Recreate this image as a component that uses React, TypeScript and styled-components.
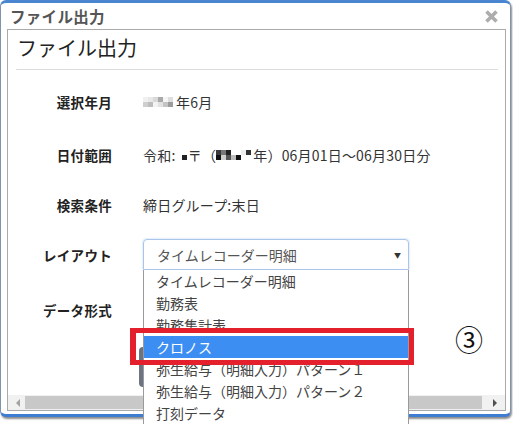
import React from "react";
import styled, { createGlobalStyle } from "styled-components";

const Global = createGlobalStyle`
  html, body { margin: 0; padding: 0; background: #ffffff; overflow: hidden; }
  body { font-family: "Noto Sans CJK JP", "Noto Sans", sans-serif; color: #222; }
  * { box-sizing: border-box; }
`;

const Page = styled.div`
  width: 513px;
  height: 425px;
  position: relative;
`;

const Window = styled.div`
  position: relative;
  width: 511px;
  height: 417px;
  display: flex;
  flex-direction: column;
  background: #fff;
  border-left: 1px solid #7f93ad;
  border-right: 1px solid #7f93ad;
  border-top: 3px solid #4a86cf;
  border-bottom: 3px solid #3d7dd2;
  border-radius: 6px;
  box-shadow: 1px 2px 2px rgba(0, 0, 0, 0.45);
  padding: 0 4px 3px 6px;
`;

const TitleBar = styled.div`
  height: 26px;
  display: flex;
  align-items: center;
  justify-content: space-between;
  padding: 0 7px 0 3px;
`;

const TitleText = styled.span`
  font-size: 15.5px;
  font-weight: 700;
  color: #555;
  letter-spacing: 0.3px;
`;

const Panel = styled.div`
  flex: 1;
  display: flex;
  flex-direction: column;
  border: 1px solid #aaaaaa;
  background: #fff;
`;

const ScrollArea = styled.div`
  flex: 1;
  position: relative;
  padding: 4px 0 0 0;
`;

const Heading = styled.h1`
  margin: 0;
  padding: 0 0 0 9px;
  font-size: 20px;
  font-weight: 400;
  line-height: 28px;
  color: #222;
`;

const Rule = styled.div`
  margin: 7px 7px 0 8px;
  height: 1px;
  background: #dcdcdc;
`;

const Form = styled.div`
  display: flex;
  flex-direction: column;
`;

const Row = styled.div<{ $mt: number; $h: number }>`
  display: grid;
  grid-template-columns: 104px 1fr;
  column-gap: 31px;
  align-items: center;
  margin-top: ${(p) => p.$mt}px;
  height: ${(p) => p.$h}px;
`;

const Label = styled.div`
  text-align: right;
  font-size: 13.5px;
  font-weight: 700;
  color: #222;
  white-space: nowrap;
  letter-spacing: 0.3px;
`;

const Value = styled.div`
  font-size: 14px;
  color: #333;
  white-space: nowrap;
  display: flex;
  align-items: center;
  letter-spacing: 0.2px;
`;

const Mosaic = styled.span<{ $ml?: number; $mr?: number }>`
  display: inline-grid;
  grid-auto-flow: column;
  grid-template-rows: repeat(2, 5px);
  margin: 0 ${(p) => p.$mr ?? 1}px 0 ${(p) => p.$ml ?? 1}px;
`;

const Cell = styled.span<{ $c: string }>`
  width: 5px;
  height: 5px;
  background: ${(p) => p.$c};
`;

const SelectWrap = styled.div`
  position: relative;
  width: 266px;
  height: 31px;
`;

const SelectBox = styled.div`
  height: 31px;
  border: 1px solid #a9c6ea;
  border-radius: 4px 4px 0 0;
  box-shadow: 0 0 2px rgba(102, 160, 230, 0.6);
  display: flex;
  align-items: center;
  justify-content: space-between;
  padding: 0 7px 0 13px;
  font-size: 14px;
  color: #555;
`;

const Caret = styled.span`
  font-size: 7px;
  color: #333;
`;

const List = styled.ul`
  position: absolute;
  left: 0;
  top: 31px;
  width: 266px;
  margin: 0;
  padding: 0;
  list-style: none;
  background: #fff;
  border-left: 1px solid #9a9a9a;
  border-right: 1px solid #9a9a9a;
  z-index: 5;
`;

const Item = styled.li<{ $active?: boolean }>`
  height: 22px;
  line-height: 22px;
  padding-left: 12px;
  font-size: 14px;
  color: ${(p) => (p.$active ? "#fff" : "#444")};
  background: ${(p) => (p.$active ? "#3d8ef2" : "#fff")};
  white-space: nowrap;
`;

const ButtonRow = styled.div`
  margin-top: 27px;
  padding-left: 131px;
`;

const DarkButton = styled.div`
  width: 110px;
  height: 40px;
  border-radius: 4px;
  background: #6b7480;
`;

const HScroll = styled.div`
  height: 15px;
  display: flex;
  align-items: center;
  background: #f1f1f1;
  padding: 0 3px;
`;

const Arrow = styled.span<{ $dir: "l" | "r" }>`
  width: 14px;
  display: flex;
  justify-content: center;
  &::before {
    content: "";
    border-top: 4px solid transparent;
    border-bottom: 4px solid transparent;
    ${(p) =>
      p.$dir === "l"
        ? "border-right: 4px solid #a3a3a3;"
        : "border-left: 4px solid #505050;"}
  }
`;

const Thumb = styled.div`
  flex: 1;
  height: 13px;
  margin: 0 6px 0 0;
  background: #c8c8c8;
`;

const Highlight = styled.div`
  position: absolute;
  left: 129px;
  top: 325px;
  width: 284px;
  height: 37px;
  border: 5px solid #e3202b;
  border-left-width: 6px;
  z-index: 10;
  pointer-events: none;
`;

const Marker = styled.div`
  position: absolute;
  left: 454px;
  top: 322px;
  font-size: 28px;
  line-height: 28px;
  color: #111;
  font-family: "Noto Sans CJK JP", sans-serif;
`;

const m1 = ["#f0f0f0", "#cfcfcf", "#e8e8e8", "#bdbdbd", "#d9d9d9", "#f3f3f3", "#a9a9a9", "#e2e2e2", "#f5f5f5", "#c4c4c4", "#dedede", "#9c9c9c"];
const m2a = ["#fff", "#222"];
const m2b = ["#3a3a3a", "#111", "#777", "#cfcfcf", "#222", "#555", "#fff", "#bbb", "#fff", "#111", "#eee", "#fff", "#333", "#fff"];

const Close = () => (
  <svg width="15" height="15" viewBox="0 0 15 15">
    <path d="M2.5 2.5 L12.5 12.5 M12.5 2.5 L2.5 12.5" stroke="#adadad" strokeWidth="3.6" strokeLinecap="butt" />
  </svg>
);

export default function App() {
  const items = [
    "タイムレコーダー明細",
    "勤務表",
    "勤務集計表",
    "クロノス",
    "弥生給与（明細入力）パターン１",
    "弥生給与（明細入力）パターン２",
    "打刻データ",
  ];
  return (
    <Page>
      <Global />
      <Window>
        <TitleBar>
          <TitleText>ファイル出力</TitleText>
          <Close />
        </TitleBar>
        <Panel>
          <ScrollArea>
            <Heading>ファイル出力</Heading>
            <Rule />
            <Form>
              <Row $mt={22} $h={20}>
                <Label>選択年月</Label>
                <Value>
                  <Mosaic $ml={0} $mr={3}>
                    {m1.map((c, i) => (
                      <Cell key={i} $c={c} />
                    ))}
                  </Mosaic>
                  年6月
                </Value>
              </Row>
              <Row $mt={33} $h={20}>
                <Label>日付範囲</Label>
                <Value>
                  令和:&nbsp;
                  <Mosaic $ml={3} $mr={1}>
                    {m2a.map((c, i) => (
                      <Cell key={i} $c={c} />
                    ))}
                  </Mosaic>
                  〒（
                  <Mosaic $ml={0} $mr={2}>
                    {m2b.map((c, i) => (
                      <Cell key={i} $c={c} />
                    ))}
                  </Mosaic>
                  年）06月01日～06月30日分
                </Value>
              </Row>
              <Row $mt={30} $h={20}>
                <Label>検索条件</Label>
                <Value>締日グループ:末日</Value>
              </Row>
              <Row $mt={24} $h={31}>
                <Label>レイアウト</Label>
                <SelectWrap>
                  <SelectBox>
                    <span>タイムレコーダー明細</span>
                    <Caret>▼</Caret>
                  </SelectBox>
                  <List>
                    {items.map((t, i) => (
                      <Item key={t} $active={i === 3}>
                        {t}
                      </Item>
                    ))}
                  </List>
                </SelectWrap>
              </Row>
              <Row $mt={30} $h={20}>
                <Label>データ形式</Label>
                <Value />
              </Row>
              <ButtonRow>
                <DarkButton />
              </ButtonRow>
            </Form>
          </ScrollArea>
          <HScroll>
            <Arrow $dir="l" />
            <Thumb />
            <Arrow $dir="r" />
          </HScroll>
        </Panel>
        <Highlight />
        <Marker>③</Marker>
      </Window>
    </Page>
  );
}
